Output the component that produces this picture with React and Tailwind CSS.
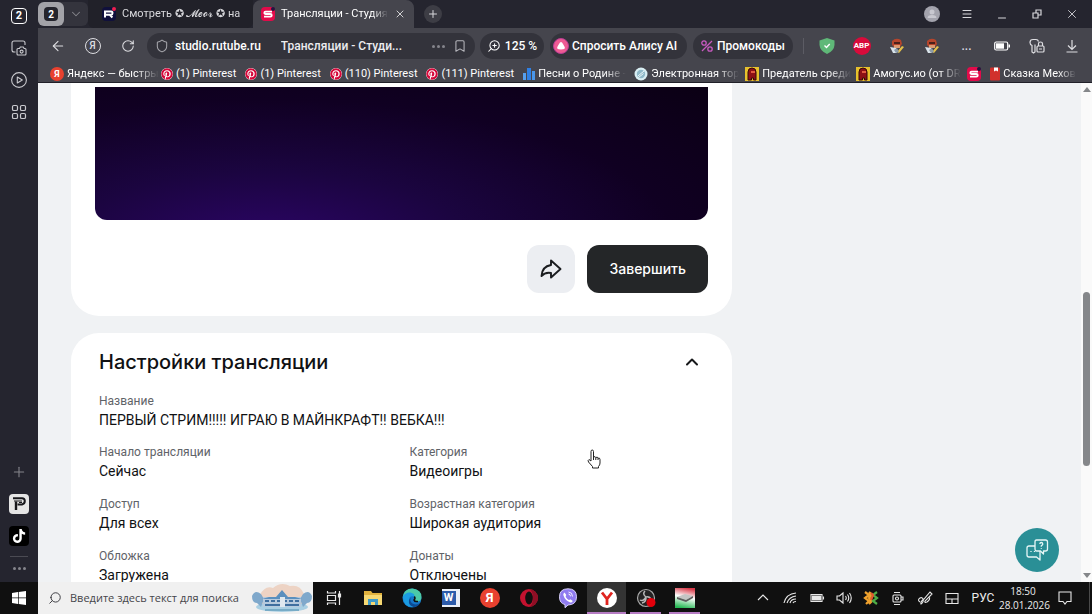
import React from "react";
import {
  ArrowLeft,
  Bookmark,
  ChevronDown,
  ChevronUp,
  Minus,
  Plus,
  RotateCw,
  Search,
  Shield,
  X,
  Menu,
  ZoomIn,
} from "lucide-react";
import { FaPinterest, FaTiktok } from "react-icons/fa";

const RutubeIcon = ({ letter, dark }) => (
  <svg viewBox="0 0 14 14" className="w-3.5 h-3.5 shrink-0">
    <rect width="14" height="14" rx="4" fill={dark ? "#10103c" : "#e20b4a"} />
    <circle cx="12" cy="2" r="2" fill={dark ? "#ef1f4f" : "#24153f"} />
    {letter === "R" ? (
      <path d="M3 10.5v-6h6.2q1.3 0 1.3 1.6t-1.3 1.6H4M8 8l2.4 2.5" fill="none" stroke="#fff" strokeWidth="2" />
    ) : (
      <path d="M11 4.6H4.6q-1.2 0-1.2 1.2T4.6 7h4.8q1.3 0 1.3 1.3t-1.3 1.3H3" fill="none" stroke="#fff" strokeWidth="1.9" />
    )}
  </svg>
);

const YandexIcon = ({ className }) => (
  <span className={"rounded-full bg-[#e8412f] text-white font-bold flex items-center justify-center shrink-0 " + className}>
    Я
  </span>
);

const PinterestIcon = () => <FaPinterest className="w-3 h-3 shrink-0 rounded-full bg-white text-[#d5083a]" />;

const BarsIcon = () => (
  <svg viewBox="0 0 12 12" className="w-3 h-3 shrink-0">
    <path d="M0 5h3v7H0z" fill="#56a0ee" />
    <path d="M4 0h4v12H4z" fill="#2f80e4" />
    <path d="M9 3h3v9H9z" fill="#4a97ea" />
  </svg>
);

const GlobeIcon = () => (
  <svg viewBox="0 0 14 14" className="w-3.5 h-3.5 shrink-0">
    <circle cx="7" cy="7" r="6.5" fill="#d9eef3" />
    <circle cx="7" cy="7" r="4.2" fill="#8fb9c9" />
    <path d="M4 9l6-5M4.500 10.500l5-4" stroke="#eef8fa" />
  </svg>
);

const AmongIcon = () => (
  <svg viewBox="0 0 14 14" className="w-3.5 h-3.5 shrink-0">
    <path d="M0 0h14v14H0z" fill="#e8c12c" />
    <path d="M3 13V5q0-4 4-4t4 4v8H8.500v-2h-2v2z" fill="#8e1015" stroke="#34090b" />
    <path d="M6 4h4v2H6z" fill="#e35a40" />
  </svg>
);

const BookIcon = () => (
  <svg viewBox="0 0 10 13" className="w-2.5 h-3.5 shrink-0">
    <rect width="10" height="13" rx="1" fill="#d1312c" />
    <path d="M4 0h4v4L6 3 4 4z" fill="#fff" />
  </svg>
);

const bookmarks = [
  { icon: <YandexIcon className="w-3.5 h-3.5 text-[9px]" />, text: "Яндекс — быстры", wide: true },
  { icon: <PinterestIcon />, text: "(1) Pinterest" },
  { icon: <PinterestIcon />, text: "(1) Pinterest" },
  { icon: <PinterestIcon />, text: "(110) Pinterest" },
  { icon: <PinterestIcon />, text: "(111) Pinterest" },
  { icon: <BarsIcon />, text: "Песни о Родине -", wide: true },
  { icon: <GlobeIcon />, text: "Электронная тор", wide: true },
  { icon: <AmongIcon />, text: "Предатель среди", wide: true },
  { icon: <AmongIcon />, text: "Амогус.ио (от DR", wide: true },
  { icon: <RutubeIcon letter="S" />, text: "" },
  { icon: <BookIcon />, text: "Сказка Мехов", last: true },
];

const Sidebar = () => (
  <aside className="w-[38px] shrink-0 bg-[#25252f] text-[#c9c9ce] flex flex-col items-center">
    <button aria-label="Окна" className="mt-2 w-4 h-4 rounded border border-white text-white text-[11px] font-bold flex items-center justify-center">
      2
    </button>
    <button aria-label="Снимок" className="mt-4">
      <svg viewBox="0 0 16 16" className="w-4 h-4" fill="none" stroke="currentColor" strokeWidth="1.1">
        <path d="M4.500 12H3q-2 0-2-2V3q0-2 2-2h9q2 0 2 2v2" />
        <path d="M6 9.500q0-1 1-1h1.500l.8-1.500h3l.8 1.500H14q1 0 1 1V14q0 1-1 1H7q-1 0-1-1z" />
        <circle cx="10.600" cy="11.600" r="1.500" />
      </svg>
    </button>
    <button aria-label="Видео" className="mt-4">
      <svg viewBox="0 0 16 16" className="w-4 h-4" fill="none" stroke="currentColor" strokeWidth="1.1">
        <circle cx="8" cy="8" r="7.400" />
        <path d="M6.300 5l5 3-5 3z" strokeLinejoin="round" />
      </svg>
    </button>
    <button aria-label="Приложения" className="mt-4">
      <svg viewBox="0 0 16 16" className="w-4 h-4" fill="none" stroke="currentColor" strokeWidth="1.2">
        <rect x="1.500" y="1.500" width="5" height="5" rx="1.300" />
        <rect x="9.500" y="1.500" width="5" height="5" rx="1.300" />
        <rect x="1.500" y="9.500" width="5" height="5" rx="1.300" />
        <rect x="9.500" y="9.500" width="5" height="5" rx="1.300" />
      </svg>
    </button>
    <div className="flex-1" />
    <button aria-label="Добавить" className="text-[#85858c]">
      <Plus className="w-4 h-4" strokeWidth={1.6} />
    </button>
    <button aria-label="Приложение" className="mt-3.5 w-5 h-5 rounded-sm bg-[#e5e5e5] flex items-center justify-center">
      <svg viewBox="0 0 16 16" className="w-4 h-4" fill="none" stroke="#16161a">
        <path d="M5 14V5.500" strokeWidth="2.400" />
        <path d="M2 2.200h9q2.800 0 2.800 2.800T11 8.400H6.500" strokeWidth="2" />
        <path d="M3 5h8M8 6.500h3" strokeWidth="1.200" />
      </svg>
    </button>
    <button aria-label="TikTok" className="mt-3 w-5 h-5 rounded-sm bg-black text-white flex items-center justify-center">
      <FaTiktok className="w-3.5 h-3.5" />
    </button>
    <div className="mt-2.5 w-[18px] h-px bg-[#4b4b53]" />
    <button aria-label="Ещё" className="mt-2.5 mb-3 flex gap-0.5">
      <span className="w-[3px] h-[3px] rounded-full bg-[#85858c]" />
      <span className="w-[3px] h-[3px] rounded-full bg-[#85858c]" />
      <span className="w-[3px] h-[3px] rounded-full bg-[#85858c]" />
    </button>
  </aside>
);

const TabBar = () => (
  <div className="h-7 flex items-stretch bg-[#25252f] text-[#d8d8dc]">
    <div className="flex items-center py-0.5 w-[50px]">
      <div className="h-full w-full flex rounded-md bg-[#34343d]">
        <button className="w-[26px] rounded-md bg-[#a3a3a8] flex items-center justify-center">
          <span className="w-3.5 h-3.5 rounded bg-[#24242c] text-white text-[10px] font-bold flex items-center justify-center">2</span>
        </button>
        <button aria-label="Список вкладок" className="flex-1 flex items-center justify-center text-[#85858c]">
          <ChevronDown className="w-3.5 h-3.5" strokeWidth={1.8} />
        </button>
      </div>
    </div>
    <button className="w-[165px] pl-3.5 pr-2 flex items-center gap-1.5 rounded-b-md bg-[#212129] text-[11px] text-left">
      <RutubeIcon letter="R" dark />
      <span className="flex-1 overflow-hidden whitespace-nowrap mask-r-from-95%">Смотреть ✪ 𝓜𝓮𝓸𝓻 ✪ на</span>
    </button>
    <div className="w-[161px] px-2 flex items-center gap-1.5 rounded-t-lg bg-[#45454d] text-[11px] text-white">
      <RutubeIcon letter="S" />
      <span className="flex-1 overflow-hidden whitespace-nowrap mask-r-from-85%">Трансляции - Студия R</span>
      <button aria-label="Закрыть вкладку">
        <X className="w-3 h-3" strokeWidth={1.5} />
      </button>
    </div>
    <button aria-label="Новая вкладка" className="ml-2.5 self-center w-[18px] h-[18px] rounded-full bg-[#3d3d45] flex items-center justify-center">
      <Plus className="w-3 h-3" strokeWidth={2} />
    </button>
    <div className="flex-1" />
    <button aria-label="Профиль" className="w-[35px] flex items-center justify-center">
      <svg viewBox="0 0 16 16" className="w-4 h-4">
        <circle cx="8" cy="8" r="8" fill="#a3a3ad" />
        <circle cx="8" cy="6" r="2.500" fill="#c8c8d0" />
        <path d="M3.500 12q0-3 4.500-3t4.500 3z" fill="#c8c8d0" />
      </svg>
    </button>
    <button aria-label="Меню" className="w-[35px] flex items-center justify-center">
      <Menu className="w-3 h-3" strokeWidth={2} />
    </button>
    <button aria-label="Свернуть" className="w-[35px] flex items-end pb-1 justify-center">
      <Minus className="w-3 h-3" strokeWidth={2} />
    </button>
    <button aria-label="Восстановить" className="w-[35px] flex items-center justify-center">
      <svg viewBox="0 0 10 10" className="w-2.5 h-2.5" fill="none" stroke="currentColor" strokeWidth="1.2">
        <path d="M1 4h5v5H1zM4 4V1h5v5H6" />
      </svg>
    </button>
    <button aria-label="Закрыть" className="w-[35px] mr-[3px] flex items-center justify-center">
      <X className="w-3.5 h-3.5" strokeWidth={1.5} />
    </button>
  </div>
);

const PenFace = () => (
  <svg viewBox="0 0 16 16" className="w-4 h-4">
    <path d="M3 3q4-4 9-1l1 4-2 3H5L3 7z" fill="#b5452c" />
    <path d="M5 4h6v2H5z" fill="#4b211b" />
    <path d="M5 7h6v3H5z" fill="#dc9a70" />
    <path d="M1 9l6 1 1 5H4z" fill="#d9e3ea" />
    <path d="M8 14l5-6 2 1-5 6z" fill="#e5c14a" />
    <path d="M5 12l3-2 2 4-3 1z" fill="#8c9cab" />
  </svg>
);

const Toolbar = () => (
  <div className="h-9 flex items-center bg-[#45454d] text-[#dedee2] text-xs font-medium">
    <button aria-label="Назад" className="w-[35px] ml-0.5 flex justify-center">
      <ArrowLeft className="w-4 h-4" strokeWidth={1.6} />
    </button>
    <button aria-label="Яндекс" className="w-[35px] flex justify-center">
      <span className="w-4 h-4 rounded-full border border-[#dedee2] text-[10px] flex items-center justify-center">Я</span>
    </button>
    <button aria-label="Обновить" className="w-[35px] flex justify-center">
      <RotateCw className="w-3.5 h-3.5" strokeWidth={1.8} />
    </button>
    <div className="ml-0.5 h-[26px] w-[328px] px-2 flex items-center rounded-full bg-[#33333b]">
      <Shield className="w-3.5 h-3.5 text-[#a5a5ab]" strokeWidth={1.8} />
      <span className="ml-1.5 text-white">studio.rutube.ru</span>
      <span className="ml-5 flex-1 truncate text-[#ececef]">Трансляции - Студи...</span>
      <button aria-label="Действия" className="flex gap-0.5">
        <span className="w-[3px] h-[3px] rounded-full bg-[#85858c]" />
        <span className="w-[3px] h-[3px] rounded-full bg-[#85858c]" />
        <span className="w-[3px] h-[3px] rounded-full bg-[#85858c]" />
      </button>
      <button aria-label="Закладка" className="ml-2">
        <Bookmark className="w-3.5 h-3.5 text-[#b5b5bb]" strokeWidth={1.8} />
      </button>
    </div>
    <button className="ml-[5px] h-[26px] w-16 flex items-center justify-center gap-1 rounded-full bg-[#33333b] text-white whitespace-nowrap">
      <ZoomIn className="w-3.5 h-3.5 -scale-x-100" strokeWidth={1.8} />
      125 %
    </button>
    <button className="ml-1.5 h-[26px] w-[137px] px-0.5 flex items-center gap-0.5 rounded-full bg-[#33333b] text-white whitespace-nowrap">
      <svg viewBox="0 0 18 18" className="w-[18px] h-[18px] shrink-0">
        <circle cx="9" cy="9" r="7.500" fill="#ee5b93" />
        <circle cx="9" cy="9" r="7.500" fill="none" stroke="#b83c94" />
        <path d="M9 5q1 0 2 2l1.700 3q1 2.500-3.700 2.500T5.300 10L7 7q1-2 2-2z" fill="#fff" />
      </svg>
      Спросить Алису AI
    </button>
    <button className="ml-1.5 h-[26px] w-[100px] px-2 flex items-center gap-1 rounded-full bg-[#33333b] text-white whitespace-nowrap">
      <svg viewBox="0 0 12 12" className="w-3 h-3 shrink-0" fill="none" stroke="#c85ac0" strokeWidth="1.3">
        <path d="M1 11L11 1" />
        <circle cx="3" cy="3" r="2.200" />
        <circle cx="9" cy="9" r="2.200" />
      </svg>
      Промокоды
    </button>
    <div className="ml-2.5 w-px h-4 bg-[#5c5c64]" />
    <div className="flex-1" />
    <button aria-label="Защита" className="w-[35px] flex justify-center">
      <svg viewBox="0 0 16 16" className="w-4 h-4">
        <path d="M8 0l7.500 2.500V7Q15 13 8 16 1 13 .5 7V2.500z" fill="#5fb878" />
        <path d="M5.500 7.500l2 2 3.200-3.500" stroke="#fff" strokeWidth="1.400" fill="none" />
      </svg>
    </button>
    <button className="w-[35px] flex justify-center">
      <span className="w-[18px] h-[18px] rounded-full bg-[#d90b3b] text-white text-[8px] font-bold flex items-center justify-center">ABP</span>
    </button>
    <button aria-label="Расширение" className="w-[35px] flex justify-center"><PenFace /></button>
    <button aria-label="Расширение" className="w-[35px] flex justify-center"><PenFace /></button>
    <button aria-label="Ещё" className="w-[35px] text-center">...</button>
    <button aria-label="Батарея" className="w-[35px] flex justify-center">
      <svg viewBox="0 0 16 10" className="w-4 h-2.5">
        <rect x=".7" y="1" width="13" height="8" rx="1.500" fill="none" stroke="#fff" strokeWidth="1.200" />
        <path d="M2 2.300h8v5.400H2z" fill="#fff" />
        <path d="M14.500 3.500H16v3h-1.500z" fill="#fff" />
      </svg>
    </button>
    <button aria-label="Пароли" className="w-[35px] flex justify-center">
      <svg viewBox="0 0 16 16" className="w-4 h-4" fill="none" stroke="currentColor" strokeWidth="1.200">
        <path d="M6 6.500V14L4.500 15 3 14V7.500Q1 6.500 1 4.500 1 1.500 4 1.500h3q2 0 2.500 2" />
        <rect x="8" y="8" width="7" height="6" rx="1" />
        <path d="M9.500 8V5.500q0-1.500 2-1.500t2 1.500V8M10 11h3" />
      </svg>
    </button>
    <button aria-label="Загрузки" className="w-[35px] mr-[3px] flex justify-center">
      <svg viewBox="0 0 14 14" className="w-3.5 h-3.5" fill="none" stroke="currentColor" strokeWidth="1.200">
        <path d="M7 1v9M3 6.500L7 10.500l4-4M1.500 13h11" />
      </svg>
    </button>
  </div>
);

const BookmarksBar = () => (
  <nav className="h-[19px] pl-3 pr-4 pt-0.5 flex items-center gap-[9px] overflow-hidden bg-[#45454d] border-b border-[#202028] text-[11px] leading-4 text-white">
    {bookmarks.map((item, i) => (
      <a
        key={i}
        href="#"
        aria-label={item.text || "Rutube"}
        className={"flex items-center gap-[3px] shrink-0 " + (item.wide ? "w-[102px]" : "")}
      >
        {item.icon}
        {item.text && (
          <span className={"whitespace-nowrap " + (item.wide || item.last ? "mask-r-from-75%" : "")}>{item.text}</span>
        )}
      </a>
    ))}
  </nav>
);

const Field = ({ label, value }) => (
  <div>
    <dt className="text-xs leading-4 text-[#5f6368]">{label}</dt>
    <dd className="mt-px text-sm leading-5 text-[#101113]">{value}</dd>
  </div>
);

const StudioPage = () => (
  <div className="flex-1 min-h-0 flex bg-[#f0f2f4] overflow-hidden">
    <main className="flex-1 pl-[33px] pr-4 overflow-hidden">
      <section className="max-w-[661px] px-6 pt-1 pb-[23px] rounded-b-[28px] bg-white">
        <div className="h-[133px] rounded-b-xl bg-[#0c0018] bg-[radial-gradient(ellipse_at_28%_115%,#2b0565_0%,#1b0540_32%,#100022_65%,#0b0014_100%)]" />
        <div className="mt-[25px] flex justify-end gap-3">
          <button aria-label="Поделиться" className="w-12 h-12 rounded-xl bg-[#eceef2] flex items-center justify-center">
            <svg viewBox="0 0 24 24" className="w-6 h-6" fill="none" stroke="#1b1d20" strokeWidth="1.900" strokeLinejoin="round">
              <path d="M12 3.500L21.500 12 12 20.500V16Q6 15 2.500 19 3 9.500 12 8z" />
            </svg>
          </button>
          <button className="h-12 px-[22px] rounded-xl bg-[#242628] text-white text-sm font-medium font-[Inter,sans-serif]">
            Завершить
          </button>
        </div>
      </section>

      <section className="mt-[17px] max-w-[661px] px-7 pt-[17px] pb-10 rounded-[28px] bg-white">
        <div className="flex items-center justify-between">
          <h2 className="text-xl leading-6 font-medium text-[#101113] font-[Inter,sans-serif]">Настройки трансляции</h2>
          <button aria-label="Свернуть настройки" className="mr-0.5">
            <ChevronUp className="w-5 h-5 text-[#17181a]" strokeWidth={2.4} />
          </button>
        </div>
        <dl className="mt-[19px] flex flex-col gap-3.5">
          <Field label="Название" value="ПЕРВЫЙ СТРИМ!!!!! ИГРАЮ В МАЙНКРАФТ!! ВЕБКА!!!" />
          <div className="grid grid-cols-2 gap-x-4 gap-y-[15px]">
            <Field label="Начало трансляции" value="Сейчас" />
            <Field label="Категория" value="Видеоигры" />
            <Field label="Доступ" value="Для всех" />
            <Field label="Возрастная категория" value="Широкая аудитория" />
            <Field label="Обложка" value="Загружена" />
            <Field label="Донаты" value="Отключены" />
          </div>
        </dl>
      </section>
    </main>

    <div className="w-[11px] shrink-0 bg-[#fafafa] flex flex-col items-center">
      <svg viewBox="0 0 8 5" className="mt-1 w-2 h-[5px]"><path d="M0 5l4-5 4 5z" fill="#85878a" /></svg>
      <div className="flex-[200]" />
      <div className="flex-[173] w-[7px] rounded-full bg-[#85878a]" />
      <div className="flex-[107]" />
      <svg viewBox="0 0 8 5" className="mb-1 w-2 h-[5px]"><path d="M0 0l4 5 4-5z" fill="#85878a" /></svg>
    </div>
  </div>
);

const taskApps = [
  {
    name: "Представление задач",
    icon: (
      <svg viewBox="0 0 16 16" className="w-4 h-4" fill="none" stroke="#e8e8e8" strokeWidth="1.200">
        <path d="M1.500 1v2h8V1M1.500 5.500h8v5h-8zM1.500 15v-2h8v2M13.500 1v14" />
        <path d="M12.500 4h2v3h-2z" fill="#e8e8e8" />
      </svg>
    ),
  },
  {
    name: "Проводник",
    icon: (
      <svg viewBox="0 0 18 16" className="w-[18px] h-4">
        <path d="M0 1h7l1.500 2H18v12H0z" fill="#e0b13e" />
        <path d="M0 5h18v10H0z" fill="#f6d873" />
        <path d="M4 15V9h10v6h-3v-3H7v3z" fill="#3f9bc9" />
      </svg>
    ),
  },
  {
    name: "Edge",
    icon: (
      <svg viewBox="0 0 20 20" className="w-5 h-5">
        <circle cx="10" cy="10" r="9.500" fill="#1476c8" />
        <path d="M.7 9Q2 .5 10.500.5q9 1 9 8.500 0 4.500-4.500 4.500-3.500 0-3-2.500 1-4-3.500-5Q3 5.500.7 9z" fill="#4bc9a8" />
        <path d="M.7 9Q3 4 8.500 4.500q4.500 1 4 4Q7 7 7 12q.5 5 6 7Q1.500 20 .7 9z" fill="#1b9ce2" />
        <path d="M9 9.500Q7 13 10.500 15.500q4 2 7.500-.5-2 4-6 4.200Q6 17.500 7 12z" fill="#0c4a93" />
        <path d="M12.300 8.500q1.500 2-.3 3.500.5 2 4 1.500" stroke="#101010" strokeWidth="1.500" fill="none" />
      </svg>
    ),
  },
  {
    name: "Word",
    icon: (
      <span className="w-[18px] h-[18px] bg-[#e9eef7] flex items-center">
        <span className="w-3.5 h-3.5 bg-[#2c5bab] text-white text-[11px] font-bold flex items-center justify-center">W</span>
      </span>
    ),
  },
  { name: "Яндекс", icon: <YandexIcon className="w-5 h-5 text-[13px]" /> },
  {
    name: "Opera",
    icon: (
      <svg viewBox="0 0 20 20" className="w-5 h-5">
        <circle cx="10" cy="10" r="9" fill="#c4122f" />
        <path d="M10 1a9 9 0 0 1 0 18q4-2 4-9t-4-9z" fill="#8e0f25" />
        <ellipse cx="10" cy="10" rx="3.800" ry="6.500" fill="#101010" />
      </svg>
    ),
  },
  {
    name: "Viber",
    icon: (
      <svg viewBox="0 0 20 20" className="w-5 h-5">
        <path d="M10 .8q8.500 0 8.500 8T10 17l-3 2.700V16.500Q1.500 15.500 1.500 8.800q0-8 8.500-8z" fill="#8f7bf0" stroke="#d9d2fb" />
        <path d="M6.500 4.500L8.300 7q-1 1-.5 2 1 2 3 3 1 0 1.700-.7l2.300 1.700q-1 2-2.500 1.500Q7 12.500 5.300 7q-.300-1.500 1.200-2.500z" fill="#fff" />
        <path d="M10.500 4q4 .3 4 4.500M10.500 6q2 .2 2 2.300" fill="none" stroke="#fff" strokeWidth=".9" />
      </svg>
    ),
  },
  {
    name: "Яндекс Браузер",
    active: true,
    open: true,
    icon: (
      <svg viewBox="0 0 20 20" className="w-5 h-5">
        <circle cx="10" cy="10" r="10" fill="#fff" />
        <path d="M5 4.500l5 6.500M15 4.500L10 11v6" fill="none" stroke="#e0241f" strokeWidth="2.800" />
      </svg>
    ),
  },
  {
    name: "OBS",
    open: true,
    icon: (
      <svg viewBox="0 0 20 20" className="w-5 h-5">
        <circle cx="10" cy="10" r="8.500" fill="#242424" stroke="#a8a8a8" strokeWidth="1.200" />
        <path d="M9 3q-3 3 1 6M4 12q3 2 6-3M10 9q4-1 5 3M10 10q0 4-4 5" fill="none" stroke="#b8b8b8" strokeWidth="1.500" />
        <circle cx="15" cy="14.500" r="4.500" fill="#e3000b" />
      </svg>
    ),
  },
  {
    name: "Диск",
    open: true,
    icon: (
      <svg viewBox="0 0 20 20" className="w-5 h-5">
        <defs>
          <linearGradient id="disk" x1="0.6" y1="0" x2="0.4" y2="1">
            <stop offset="0" stopColor="#d93848" />
            <stop offset=".45" stopColor="#ffffff" />
            <stop offset="1" stopColor="#27ba55" />
          </linearGradient>
        </defs>
        <path d="M0 0h20v20H0z" fill="url(#disk)" />
        <path d="M2 9l8-3 8 2-7 4z" fill="#c4c4c4" />
        <path d="M2 9l9 3 7-4v2l-7 4-9-3z" fill="#5d5d5d" />
      </svg>
    ),
  },
];

const trayIcons = [
  <path key="up" d="M3 10l5-5 5 5" />,
  <path key="wifi" d="M2 13Q4 4 14 3M5 13q2-6 9-7M8 13q1-4 6-4M11 13q.500-1.500 3-1.500" />,
  <g key="bat"><path d="M2 4.500h11v7H2zM14.500 6.500v3" /><path d="M3.500 6h8v4h-8z" fill="#e8e8e8" /></g>,
  <path key="vol" d="M1 6h2.500L7 3v10L3.500 10H1zM9.500 6q1.500 2 0 4M11.500 4.500q2.500 3.500 0 7M13.500 3q3.500 5 0 10" />,
  <g key="app" strokeWidth="2.200">
    <path d="M2 2l4 3-4 3 4 3-3 3M6 2l3 3-3 3 3 3-3 3" stroke="#efa12d" />
    <path d="M14 2l-4 3 4 3-4 3 4 3" stroke="#4fae47" />
    <path d="M8 3l2 2-2 5" stroke="#e25a2e" />
  </g>,
  <g key="meet"><rect x="3" y="5" width="8" height="7" rx="1" /><path d="M11 7h2v3h-2M4 2.500h6M4 14.500h6" /><circle cx="7" cy="8.500" r="1.500" /></g>,
  <path key="pen" d="M3 12q-3-2 0-4 2-1 3 1 1 3-2 5-1-2 3-5l6-7 2 2-7 7q-1 2 2 1 4-3 2-5" />,
  <path key="touch" d="M2 3.500h12v10H2zM2 9h12M8 9v4.500" />,
];

const Taskbar = () => (
  <footer className="h-8 shrink-0 flex bg-[#101010] text-[#ececec]">
    <button aria-label="Пуск" className="w-[38px] flex items-center justify-center">
      <svg viewBox="0 0 14 14" className="w-3.5 h-3.5" fill="#fff">
        <path d="M0 2l6-.9v5.500H0zM6.700 1L14 0v6.600H6.700zM0 7.300h6v5.600L0 12zM6.700 7.300H14V14l-7.300-1z" />
      </svg>
    </button>
    <label className="w-[275px] pl-2.5 flex items-center bg-[#f0f0f0] text-[#35353a]">
      <Search className="w-3.5 h-3.5 shrink-0 -scale-x-100" strokeWidth={1.6} />
      <input
        type="text"
        aria-label="Поиск"
        placeholder="Введите здесь текст для поиска"
        className="ml-2 flex-1 min-w-0 bg-transparent text-[11px] outline-none placeholder:text-[#45454a] font-['Open_Sans','Noto_Sans',sans-serif]"
      />
      <svg viewBox="0 0 62 30" className="w-[62px] h-[30px] shrink-0">
        <path d="M9 12Q14 2 22 5q8-7 17-2 10-2 14 8v16H10z" fill="#edd3c4" />
        <ellipse cx="31" cy="24" rx="26" ry="5" fill="#a9cfe3" />
        <path d="M1 13q3-7 9-2l3 5-3 8-4-4q-5 0-5-7zM61 13q-3-7-9-2l-3 5 3 8 4-4q5 0 5-7z" fill="#7fa8cb" />
        <path d="M12 14h38v10H12z" fill="#b7cadd" />
        <path d="M11 16l7-2h7l6-7 6 7h7l7 2z" fill="#5a8fbe" />
        <path d="M14 18h4m2 0h4m2 0h4m2 0h4m2 0h4m2 0h4M14 22h34" stroke="#3f6f9f" strokeWidth="2" />
        <path d="M29 14h5v10h-5z" fill="#dfe8ef" />
        <path d="M14 27h34" stroke="#78acc7" strokeWidth="2" />
      </svg>
    </label>
    <div className="flex ml-px">
      {taskApps.map((app) => (
        <button
          key={app.name}
          aria-label={app.name}
          className={"w-[39px] relative flex items-center justify-center " + (app.active ? "bg-[#343434]" : "")}
        >
          {app.icon}
          {app.open && (
            <span className={"absolute bottom-0 h-0.5 bg-[#b67cc4] " + (app.active ? "inset-x-0" : "inset-x-1")} />
          )}
        </button>
      ))}
    </div>
    <div className="flex-1" />
    <div className="flex items-center">
      {trayIcons.map((icon) => (
        <span key={icon.key} className="w-[27px] flex justify-center">
          <svg viewBox="0 0 16 16" className="w-4 h-4" fill="none" stroke="#e8e8e8" strokeWidth="1.100">
            {icon}
          </svg>
        </span>
      ))}
    </div>
    <div className="ml-0.5 flex items-center text-xs">
      <span className="w-8 text-center">РУС</span>
      <time className="w-12 text-center text-[10px] leading-[14px] whitespace-nowrap font-['Open_Sans',sans-serif]">
        18:50
        <br />
        28.01.2026
      </time>
      <button aria-label="Уведомления" className="w-9 flex justify-center">
        <svg viewBox="0 0 14 14" className="w-3.5 h-3.5" fill="none" stroke="#e8e8e8" strokeWidth="1.100">
          <path d="M1 1h12v9.500H9L7 13l-2-2.500H1z" />
        </svg>
      </button>
      <span className="ml-1.5 w-px h-8 mr-0.5 bg-[#4a4a4a]" />
    </div>
  </footer>
);

const App = () => (
  <div className="relative h-screen flex flex-col overflow-hidden font-[Roboto,'Noto_Sans',sans-serif]">
    <div className="flex-1 min-h-0 flex">
      <Sidebar />
      <div className="flex-1 min-w-0 flex flex-col">
        <TabBar />
        <Toolbar />
        <BookmarksBar />
        <StudioPage />
      </div>
    </div>
    <Taskbar />

    <button aria-label="Помощь" className="absolute right-[33px] bottom-[42px] w-11 h-11 rounded-full bg-[#2a8f96] flex items-center justify-center">
      <svg viewBox="0 0 24 24" className="w-6 h-6" fill="none" stroke="#e6f6f6" strokeWidth="1.300" strokeLinejoin="round">
        <path d="M11.500 2h9q2 0 2 2v7q0 2-2 2h-2v3l-3-3h-4q-1.500 0-1.500-2V4q0-2 1.500-2z" />
        <path d="M10 8H4Q2 8 2 10v7q0 2 2 2h7.500l3.500 3v-9" />
        <path d="M14.800 6q.2-1.500 1.500-1.500T17.800 6q0 1-1.500 1.800v1M16.300 10v.8M6 13v1M9.500 13v1" />
      </svg>
    </button>

    {/* hand cursor */}
    <svg viewBox="0 0 14 20" className="absolute left-[587px] top-[449px] w-3.5 h-5" fill="#fff" stroke="#222" strokeLinejoin="round">
      <path d="M4 12V2.500q0-1.500 1.200-1.500T6.500 2.500V8q2-1 2.200.5 2-1 2.300.7 2-.7 2 1.300v3.500q0 2-1.500 3.500V19H5.500v-1.500L1.500 13q-1-2 .5-2.500z" />
      <path d="M6.500 8v3M8.800 8.500V11M11 9.200V11" />
    </svg>
  </div>
);

export default App;
